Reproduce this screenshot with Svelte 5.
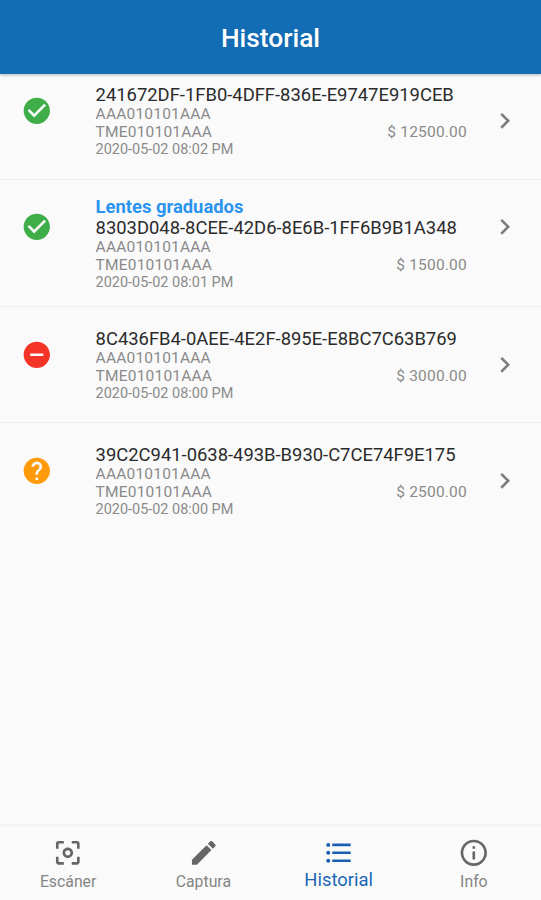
<script lang="ts">
	type Status = 'ok' | 'rejected' | 'unknown';

	interface Invoice {
		id: string;
		label?: string;
		issuer: string;
		receiver: string;
		date: string;
		amount: string;
		status: Status;
	}

	const invoices: Invoice[] = [
		{
			id: '241672DF-1FB0-4DFF-836E-E9747E919CEB',
			issuer: 'AAA010101AAA',
			receiver: 'TME010101AAA',
			date: '2020-05-02 08:02 PM',
			amount: '$ 12500.00',
			status: 'ok'
		},
		{
			id: '8303D048-8CEE-42D6-8E6B-1FF6B9B1A348',
			label: 'Lentes graduados',
			issuer: 'AAA010101AAA',
			receiver: 'TME010101AAA',
			date: '2020-05-02 08:01 PM',
			amount: '$ 1500.00',
			status: 'ok'
		},
		{
			id: '8C436FB4-0AEE-4E2F-895E-E8BC7C63B769',
			issuer: 'AAA010101AAA',
			receiver: 'TME010101AAA',
			date: '2020-05-02 08:00 PM',
			amount: '$ 3000.00',
			status: 'rejected'
		},
		{
			id: '39C2C941-0638-493B-B930-C7CE74F9E175',
			issuer: 'AAA010101AAA',
			receiver: 'TME010101AAA',
			date: '2020-05-02 08:00 PM',
			amount: '$ 2500.00',
			status: 'unknown'
		}
	];

	const statusIcons: Record<Status, string> = {
		ok: 'M12 2C6.48 2 2 6.48 2 12s4.48 10 10 10 10-4.48 10-10S17.52 2 12 2zm-2 15l-5-5 1.41-1.41L10 14.17l7.59-7.59L19 8l-9 9z',
		rejected: 'M12 2C6.48 2 2 6.48 2 12s4.48 10 10 10 10-4.48 10-10S17.52 2 12 2zm5 11H7v-2h10v2z',
		unknown:
			'M12 2C6.48 2 2 6.48 2 12s4.48 10 10 10 10-4.48 10-10S17.52 2 12 2zm1 17h-2v-2h2v2zm2.07-7.75l-.9.92C13.45 12.9 13 13.5 13 15h-2v-.5c0-1.1.45-2.1 1.17-2.83l1.24-1.26c.37-.36.59-.86.59-1.41 0-1.1-.9-2-2-2s-2 .9-2 2H8c0-2.21 1.79-4 4-4s4 1.79 4 4c0 .88-.36 1.68-.93 2.25z'
	};

	const tabs = [
		{
			id: 'scanner',
			label: 'Escáner',
			icon: 'M5 15H3v4c0 1.1.9 2 2 2h4v-2H5v-4zM5 5h4V3H5c-1.1 0-2 .9-2 2v4h2V5zm14-2h-4v2h4v4h2V5c0-1.1-.9-2-2-2zm0 16h-4v2h4c1.1 0 2-.9 2-2v-4h-2v4zM12 8c-2.21 0-4 1.79-4 4s1.79 4 4 4 4-1.79 4-4-1.79-4-4-4zm0 6c-1.1 0-2-.9-2-2s.9-2 2-2 2 .9 2 2-.9 2-2 2z'
		},
		{
			id: 'capture',
			label: 'Captura',
			icon: 'M3 17.25V21h3.75L17.81 9.94l-3.75-3.75L3 17.25zM20.71 7.04c.39-.39.39-1.02 0-1.41l-2.34-2.34c-.39-.39-1.02-.39-1.41 0l-1.83 1.83 3.75 3.75 1.83-1.83z'
		},
		{
			id: 'history',
			label: 'Historial',
			icon: 'M4 10.5c-.83 0-1.5.67-1.5 1.5s.67 1.5 1.5 1.5 1.5-.67 1.5-1.5-.67-1.5-1.5-1.5zm0-6c-.83 0-1.5.67-1.5 1.5S3.17 7.5 4 7.5 5.5 6.83 5.5 6 4.83 4.5 4 4.5zm0 12c-.83 0-1.5.68-1.5 1.5s.68 1.5 1.5 1.5 1.5-.68 1.5-1.5-.67-1.5-1.5-1.5zM7 19h14v-2H7v2zm0-6h14v-2H7v2zm0-8v2h14V5H7z'
		},
		{
			id: 'info',
			label: 'Info',
			icon: 'M11 17h2v-6h-2v6zm1-15C6.48 2 2 6.48 2 12s4.48 10 10 10 10-4.48 10-10S17.52 2 12 2zm0 18c-4.41 0-8-3.59-8-8s3.59-8 8-8 8 3.59 8 8-3.59 8-8 8zM11 9h2V7h-2v2z'
		}
	];

	let active = $state('history');
</script>

<div class="app">
	<header class="bar">
		<h1>Historial</h1>
	</header>

	<main class="list">
		{#each invoices as invoice (invoice.id)}
			<article class="item" class:labelled={invoice.label}>
				<svg class="status {invoice.status}" viewBox="0 0 24 24" aria-hidden="true">
					<path d={statusIcons[invoice.status]} />
				</svg>
				<div class="body">
					{#if invoice.label}
						<div class="label">{invoice.label}</div>
					{/if}
					<div class="id">{invoice.id}</div>
					<div class="rfc">{invoice.issuer}</div>
					<div class="row">
						<span class="rfc">{invoice.receiver}</span>
						<span class="amount">{invoice.amount}</span>
					</div>
					<div class="date">{invoice.date}</div>
				</div>
				<svg class="chevron" viewBox="0 0 24 24" aria-hidden="true">
					<path d="M10 6L8.59 7.41 13.17 12l-4.58 4.59L10 18l6-6z" />
				</svg>
			</article>
		{/each}
	</main>

	<nav class="tabs">
		{#each tabs as tab (tab.id)}
			<button class="tab" class:active={active === tab.id} onclick={() => (active = tab.id)}>
				<svg viewBox="0 0 24 24" aria-hidden="true"><path d={tab.icon} /></svg>
				<span>{tab.label}</span>
			</button>
		{/each}
	</nav>
</div>

<style>
	:global(body) {
		background: #fafafa;
	}

	.app {
		display: flex;
		flex-direction: column;
		height: 100vh;
		overflow: hidden;
		background: #fafafa;
		color: #2b2b2b;
		font-family: Roboto, 'Liberation Sans', sans-serif;
	}

	svg {
		display: block;
		flex: none;
		width: 31.6px;
		height: 31.6px;
		fill: currentColor;
	}

	.bar {
		position: relative;
		z-index: 1;
		display: flex;
		flex: none;
		align-items: center;
		justify-content: center;
		height: 74px;
		padding-top: 2px;
		box-sizing: border-box;
		background: #136db5;
		box-shadow: 0 1px 3px rgba(0, 0, 0, 0.28);
	}

	h1 {
		margin: 0;
		color: #fff;
		font-size: 26.3px;
		font-weight: 500;
		line-height: 30px;
	}

	.list {
		flex: 1;
		min-height: 0;
		overflow: hidden;
	}

	.item {
		display: flex;
		align-items: flex-start;
		height: 116px;
		padding: 21px 20px 0 21px;
		box-sizing: border-box;
		border-bottom: 1px solid #eeeeee;
	}
	/* the first row sits partly under the app bar */
	.item:first-child {
		height: 117px;
		margin-top: -11px;
	}
	.item:last-child {
		border-bottom: none;
	}
	.item.labelled {
		height: 127px;
		padding-top: 16px;
	}

	.status {
		margin-top: 10.5px;
	}
	.labelled .status {
		margin-top: 15px;
	}
	.ok {
		color: #3fae49;
	}
	.rejected {
		color: #f43427;
	}
	.unknown {
		color: #ff9b0b;
	}

	.body {
		flex: 1;
		margin-left: 43px;
		white-space: nowrap;
	}

	.label {
		color: #2a94f0;
		font-size: 18.4px;
		font-weight: 700;
		line-height: 21px;
	}

	.id {
		font-size: 18.4px;
		line-height: 21px;
	}

	.rfc,
	.date,
	.amount {
		color: #8a8a8a;
		line-height: 18px;
	}

	.rfc,
	.amount {
		font-size: 15.5px;
		letter-spacing: 0.2px;
	}

	.row {
		display: flex;
		justify-content: space-between;
		height: 18px;
	}

	.date {
		font-size: 14.45px;
	}

	.chevron {
		margin: 21px 0 0 22.5px;
		color: #7d7d7d;
	}
	.labelled .chevron {
		margin-top: 15px;
	}

	.tabs {
		display: grid;
		flex: none;
		grid-template-columns: repeat(4, 1fr);
		height: 76px;
		box-sizing: border-box;
		border-top: 3px solid #f5f5f5;
	}

	.tab {
		display: flex;
		flex-direction: column;
		align-items: center;
		padding: 10px 0 0 1px;
		border: none;
		background: none;
		color: #666;
		font: inherit;
		font-size: 15.8px;
		line-height: 20px;
		cursor: pointer;
	}
	.tab span {
		margin-top: 3px;
		color: #858585;
	}
	.tab.active {
		color: #1a5fb4;
	}
	.tab.active span {
		margin-top: 1.5px;
		color: #1967b8;
		font-size: 18.4px;
	}
</style>
